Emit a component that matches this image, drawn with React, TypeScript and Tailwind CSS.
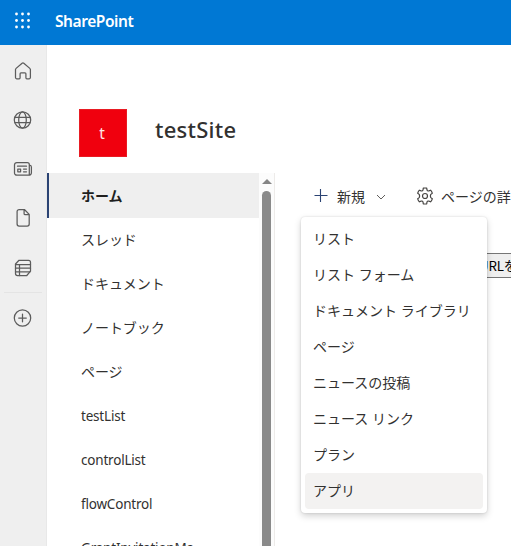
import type { ReactNode } from "react";

const navItems = [
  { label: "ホーム", active: true },
  { label: "スレッド" },
  { label: "ドキュメント" },
  { label: "ノートブック" },
  { label: "ページ" },
  { label: "testList", latin: true },
  { label: "controlList", latin: true },
  { label: "flowControl", latin: true },
  { label: "GrantInvitationMa", latin: true },
];

const menuItems = [
  "リスト",
  "リスト フォーム",
  "ドキュメント ライブラリ",
  "ページ",
  "ニュースの投稿",
  "ニュース リンク",
  "プラン",
  "アプリ",
];

function RailIcon({ children }: { children: ReactNode }) {
  return (
    <div className="flex h-[49.25px] items-center justify-center">
      <svg
        width="20"
        height="20"
        viewBox="0 0 20 20"
        fill="none"
        stroke="#5c5c5c"
        strokeWidth="1.25"
        strokeLinecap="round"
        strokeLinejoin="round"
      >
        {children}
      </svg>
    </div>
  );
}

function Header() {
  return (
    <header className="flex h-[44.5px] shrink-0 items-center bg-[#0078d4] text-white">
      <svg width="47" height="44" viewBox="0 0 47 44" fill="#fff">
        {[14, 20.5, 27].map((y) =>
          [16.5, 22.5, 28.5].map((x) => (
            <circle key={`${x}-${y}`} cx={x} cy={y} r="1.4" />
          )),
        )}
      </svg>
      <span className="-mt-px ml-2 text-[15.5px] font-semibold tracking-[-0.42px]">
        SharePoint
      </span>
    </header>
  );
}

function Rail() {
  return (
    <aside className="w-[47px] shrink-0 border-r border-[#e8e8e8] bg-[#efefef] pt-[1.5px]">
      <RailIcon>
        <path d="M2.500 8.600c0-.5.2-.9.6-1.200l6-5.200c.5-.4 1.200-.4 1.700 0l6 5.200c.4.300.6.700.6 1.200v8c0 .7-.5 1.200-1.200 1.200h-2.300c-.6 0-1-.4-1-1v-4c0-.5-.4-.9-.9-.9H8c-.5 0-.9.4-.9.900v4c0 .6-.4 1-1 1H3.700c-.7 0-1.200-.5-1.200-1.200z" />
      </RailIcon>
      <RailIcon>
        <circle cx="9.500" cy="10" r="8.200" />
        <ellipse cx="9.500" cy="10" rx="3.800" ry="8.200" />
        <path d="M2 7.300h15M2 12.700h15" />
      </RailIcon>
      <RailIcon>
        <path d="M3.800 3.500h10.500a2 2 0 0 1 2 2v10.700H3.800a2.300 2.300 0 0 1-2.300-2.300V5.800a2.300 2.300 0 0 1 2.300-2.300zM16.300 6c1.300.2 2.100.9 2.100 2v5.700a2.500 2.500 0 0 1-2.500 2.500" />
        <path d="M4.500 7.200h9M10.500 10h3M10.500 12.800h3M4.800 10h2.800v2.800H4.800z" />
      </RailIcon>
      <RailIcon>
        <path d="M6.100 1.500h5.300L16.200 6.400V16a2 2 0 0 1-2 2H6.100a2 2 0 0 1-2-2V3.500a2 2 0 0 1 2-2zM11.100 1.700V5.700a1 1 0 0 0 1 1h3.900" />
      </RailIcon>
      <RailIcon>
        <path d="M6 2.300h9.500a2 2 0 0 1 2 2v8.900l-3.700 4.300H4.500a2 2 0 0 1-2-2V6z" />
        <path d="M2.500 6.500h15M2.500 10.200h15M2.500 13.800h14.500M6.500 6.500v11" />
      </RailIcon>
      <div className="mx-1 border-t border-[#e4e4e4]" />
      <RailIcon>
        <circle cx="9.500" cy="10" r="8.200" />
        <path d="M9.500 6.200v7.600M5.700 10h7.600" />
      </RailIcon>
    </aside>
  );
}

function SideNav() {
  return (
    <div className="flex w-[228px] shrink-0 border-r border-[#edebe9]">
      <nav className="w-[212px] overflow-hidden text-[14px] leading-5 text-[#323130]">
        {navItems.map(({ label, active, latin }) => (
          <div
            key={label}
            className={`flex items-center pl-8 ${
              active
                ? "h-[45px] border-l-2 border-[#2b4373] bg-[#efefef] font-bold text-[#201f1e]"
                : "ml-0.5 h-11"
            } ${latin ? "text-[13.5px] tracking-[-0.2px]" : "tracking-[-0.05px]"}`}
          >
            {label}
          </div>
        ))}
      </nav>
      <div className="flex grow flex-col items-center bg-[#fcfcfc] pt-1.5">
        <svg width="10" height="5" viewBox="0 0 10 5" fill="#858585">
          <path d="M5 0l5 5H0z" />
        </svg>
        <div className="mt-[7px] w-[9px] grow rounded-t-full bg-[#8a8a8a]" />
      </div>
    </div>
  );
}

function CommandBar() {
  return (
    <div className="flex h-[46px] items-center overflow-hidden whitespace-nowrap pl-[39px] text-[14px] text-[#323130]">
      <svg
        className="shrink-0"
        width="14"
        height="14"
        viewBox="0 0 14 14"
        stroke="#2b4373"
        strokeWidth="1.1"
      >
        <path d="M.5 6.500h13M6.500 0v13" />
      </svg>
      <span className="ml-[9px]">新規</span>
      <svg
        className="mt-0.5 ml-[11px] shrink-0"
        width="10"
        height="6"
        viewBox="0 0 10 6"
        fill="none"
        stroke="#605e5c"
      >
        <path d="M1 1l4 4 4-4" />
      </svg>
      <svg
        className="ml-[30px] shrink-0"
        width="18"
        height="18"
        viewBox="0 0 18 18"
        fill="none"
        stroke="#484644"
        strokeWidth="1.2"
        strokeLinejoin="round"
      >
        <path d="M7.300 1.200Q9 .8 10.700 1.200L11 3.100Q11.500 4.300 12.800 3.900L14.600 3.200Q15.800 4.500 16.300 6.200L14.800 7.400Q13.900 9 14.800 10.600L16.300 11.800Q15.800 13.500 14.600 14.800L12.800 14.100Q11.500 13.700 11 14.900L10.700 16.800Q9 17.200 7.300 16.800L7 14.900Q6.500 13.700 5.200 14.100L3.400 14.800Q2.200 13.500 1.700 11.800L3.200 10.600Q4.100 9 3.200 7.400L1.700 6.200Q2.200 4.500 3.400 3.200L5.200 3.900Q6.500 4.300 7 3.100Z" />
        <circle cx="9" cy="9" r="2.500" />
      </svg>
      <span className="ml-[7px]">ページの詳</span>
    </div>
  );
}

function NewMenu() {
  return (
    <div className="absolute top-11 left-[26px] w-[186px] rounded bg-white p-1 text-[14px] leading-5 text-[#323130] shadow-[0_3px_7px_rgba(0,0,0,0.18),0_0_2px_rgba(0,0,0,0.15)]">
      {menuItems.map((item, i) => (
        <div
          key={item}
          className={`flex h-9 items-center rounded-sm pl-2 whitespace-nowrap ${
            i === menuItems.length - 1 ? "bg-[#f3f2f1]" : ""
          }`}
        >
          {item}
        </div>
      ))}
    </div>
  );
}

export default function App() {
  return (
    <div className="flex h-[546px] w-[511px] flex-col overflow-hidden bg-white font-['Noto_Sans','Noto_Sans_CJK_JP',sans-serif]">
      <Header />
      <div className="flex min-h-0 grow">
        <Rail />
        <main className="flex min-w-0 grow flex-col">
          <div className="flex h-[128.5px] shrink-0 items-end pb-4 pl-8">
            <div className="flex size-12 items-center justify-center border border-[#e81b23] bg-[#f0000e] pt-0.5 pr-0.5 text-[15.5px] text-[#ffe5e5]">
              t
            </div>
            <h1 className="ml-7 self-end pb-[11px] text-[22px] font-medium tracking-[0.25px] text-[#323130]">
              testSite
            </h1>
          </div>
          <div className="flex min-h-0 grow">
            <SideNav />
            <section className="relative min-w-0 grow">
              <CommandBar />
              <div className="mt-[34px] ml-[200px] flex h-[25px] items-center border-y border-[#767676] bg-[#efefef] pl-1 font-['Noto_Sans_CJK_JP',sans-serif] text-[13.3px] tracking-[-0.2px] whitespace-nowrap text-black">
                URLを
              </div>
              <NewMenu />
            </section>
          </div>
        </main>
      </div>
    </div>
  );
}
